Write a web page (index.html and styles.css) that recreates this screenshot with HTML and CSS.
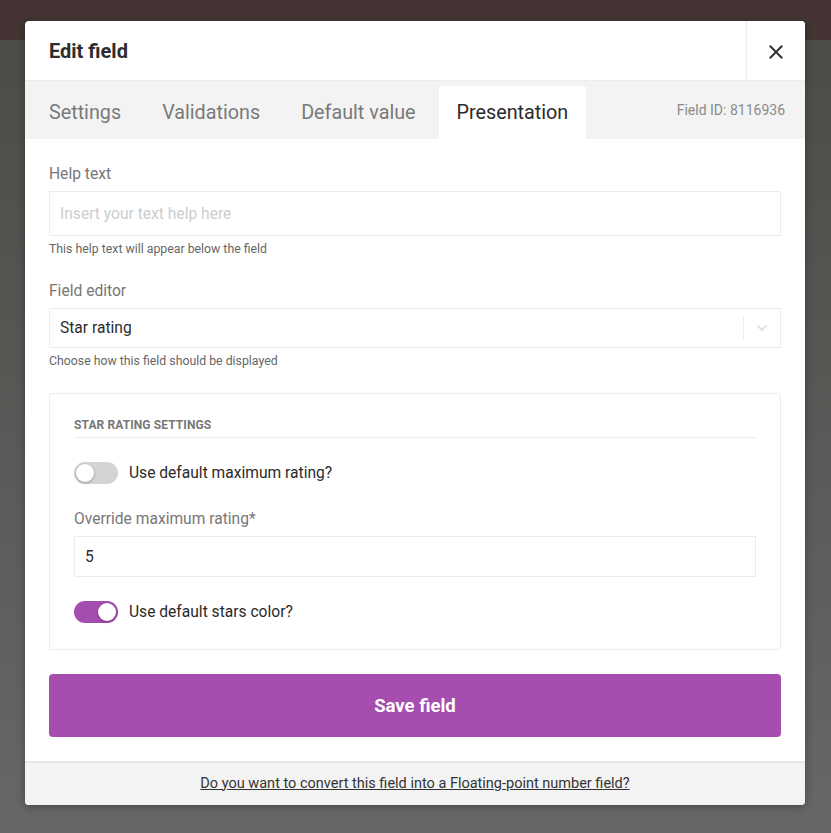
FILE: index.html
```html
<!DOCTYPE html>
<html>
<head>
<meta charset="utf-8">
<link rel="stylesheet" href="styles.css">
</head>
<body>
<div class="modal">
  <div class="modal-header">
    <h1 class="modal-title">Edit field</h1>
    <button class="close-btn" aria-label="Close">
      <svg width="14" height="14" viewBox="0 0 14 14"><path d="M1.5 1.5 L12.5 12.5 M12.5 1.5 L1.5 12.5" stroke="#333" stroke-width="2" fill="none" stroke-linecap="square"/></svg>
    </button>
  </div>
  <div class="tabs">
    <div class="tab">Settings</div>
    <div class="tab">Validations</div>
    <div class="tab">Default value</div>
    <div class="tab active">Presentation</div>
    <div class="field-id">Field ID: 8116936</div>
  </div>
  <div class="modal-body">
    <div class="form-group">
      <label class="label">Help text</label>
      <div class="input placeholder">Insert your text help here</div>
      <div class="hint">This help text will appear below the field</div>
    </div>
    <div class="form-group">
      <label class="label">Field editor</label>
      <div class="input select">
        <span class="select-value">Star rating</span>
        <span class="select-sep"></span>
        <span class="select-arrow">
          <svg width="12" height="8" viewBox="0 0 12 8"><path d="M1.5 1.5 L6 6 L10.5 1.5" stroke="#e2e2e2" stroke-width="2" fill="none"/></svg>
        </span>
      </div>
      <div class="hint">Choose how this field should be displayed</div>
    </div>
    <div class="panel">
      <div class="panel-title">STAR RATING SETTINGS</div>
      <div class="toggle-row">
        <span class="toggle"><span class="knob"></span></span>
        <span class="toggle-label">Use default maximum rating?</span>
      </div>
      <div class="panel-group">
        <label class="label">Override maximum rating*</label>
        <div class="input value">5</div>
      </div>
      <div class="toggle-row last">
        <span class="toggle on"><span class="knob"></span></span>
        <span class="toggle-label">Use default stars color?</span>
      </div>
    </div>
    <button class="save-btn">Save field</button>
  </div>
  <div class="modal-footer">
    <a class="convert-link" href="#">Do you want to convert this field into a Floating-point number field?</a>
  </div>
</div>
</body>
</html>
```
FILE: styles.css
```css
html, body {
  margin: 0;
  height: 100%;
}
body {
  background:
    linear-gradient(to bottom, #443434 0, #443434 40px, transparent 40px),
    linear-gradient(to bottom, #4a4a46 0, #676767 100%);
  font-family: Roboto, "Liberation Sans", sans-serif;
  padding: 21px 26px 0 25px;
  box-sizing: border-box;
  min-height: 833px;
}
.modal {
  width: 780px;
  background: #fff;
  border-radius: 4px;
  box-shadow: 0 2px 8px rgba(0,0,0,0.3);
  overflow: hidden;
}
.modal-header {
  display: flex;
  align-items: stretch;
  height: 59px;
  border-bottom: 1px solid #ececec;
}
.modal-title {
  flex: 1;
  margin: 0;
  padding-left: 24px;
  display: flex;
  align-items: center;
  font-size: 20px;
  font-weight: 700;
  color: #2d2d2d;
}
.close-btn {
  width: 59px;
  border: 0;
  border-left: 1px solid #ececec;
  background: #fff;
  display: flex;
  align-items: center;
  justify-content: center;
  padding: 0;
  padding-top: 2px;
}
.tabs {
  display: flex;
  align-items: flex-end;
  height: 58px;
  background: #f3f3f3;
  padding-left: 6px;
  padding-right: 20px;
  gap: 5px;
}
.tab {
  height: 53px;
  padding: 0 18px;
  display: flex;
  align-items: center;
  padding-bottom: 1px;
  box-sizing: border-box;
  font-size: 19.75px;
  color: #7a7a7a;
  border-radius: 3px 3px 0 0;
}
.tab.active {
  background: #fff;
  color: #2b2b2b;
}
.field-id {
  margin-left: auto;
  align-self: center;
  font-size: 14px;
  color: #8a8a8a;
}
.modal-body {
  padding: 26px 24px 24px;
}
.form-group {
  margin-bottom: 25.5px;
}
.label {
  display: block;
  font-size: 15.6px;
  color: #777;
  margin-bottom: 8px;
  line-height: 18px;
}
.input {
  height: 45px;
  box-sizing: border-box;
  border: 1px solid #ececec;
  display: flex;
  align-items: center;
  padding: 0 10px;
  font-size: 15.6px;
  color: #2b2b2b;
}
.placeholder {
  color: #cdcdcd;
}
.select {
  height: 40px;
  padding-right: 0;
}
.select-value {
  flex: 1;
}
.select-sep {
  width: 1px;
  height: 24px;
  background: #ececec;
}
.select-arrow {
  width: 36px;
  display: flex;
  justify-content: center;
  align-items: center;
}
.hint {
  font-size: 12.3px;
  line-height: 14px;
  color: #666;
  margin-top: 6px;
}
.panel {
  border: 1px solid #ececec;
  border-radius: 3px;
  padding: 24px 24px 26px;
  margin-bottom: 24px;
}
.panel-title {
  font-size: 12px;
  font-weight: 700;
  color: #777;
  padding-bottom: 5px;
  border-bottom: 1px solid #ececec;
  letter-spacing: 0.1px;
}
.toggle-row {
  display: flex;
  align-items: center;
  gap: 11px;
  margin-top: 24px;
}
.toggle-row.last {
  margin-top: 24px;
}
.toggle {
  width: 44px;
  height: 22px;
  border-radius: 11px;
  background: #d4d4d4;
  position: relative;
  flex: none;
}
.toggle .knob {
  position: absolute;
  top: 2px;
  left: 2px;
  width: 18px;
  height: 18px;
  border-radius: 50%;
  background: #fff;
  box-shadow: 0 1px 3px rgba(0,0,0,0.3);
}
.toggle.on {
  background: #a64db0;
}
.toggle.on .knob {
  left: 24px;
}
.toggle-label {
  font-size: 15.6px;
  color: #2b2b2b;
}
.panel-group {
  margin-top: 26px;
}
.panel-group .input {
  height: 41px;
}
.save-btn {
  display: block;
  width: 100%;
  height: 63px;
  border: 0;
  border-radius: 4px;
  background: #a64db0;
  color: #fff;
  font-family: Roboto, "Liberation Sans", sans-serif;
  font-size: 18.5px;
  font-weight: 700;
}
.modal-footer {
  height: 44px;
  background: #f3f3f3;
  box-shadow: inset 0 2px 2px rgba(0,0,0,0.06);
  display: flex;
  align-items: center;
  justify-content: center;
}
.convert-link {
  font-size: 14.5px;
  color: #333;
  text-decoration: underline;
}
```
